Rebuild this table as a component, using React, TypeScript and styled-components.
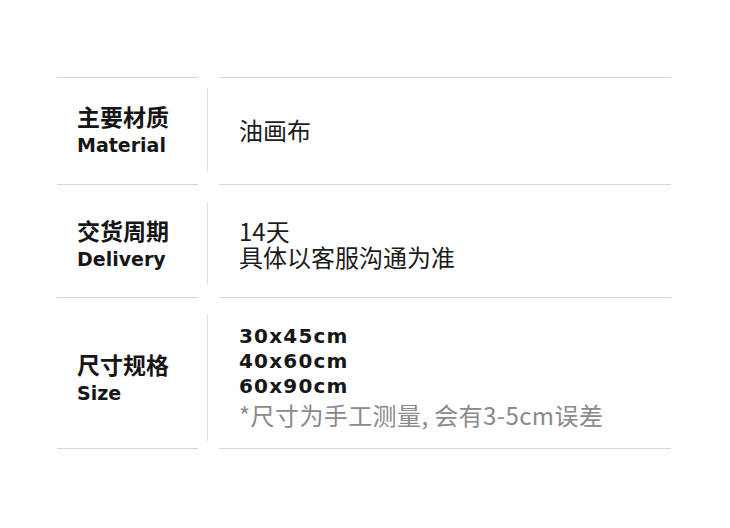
import React from "react";
import styled, { createGlobalStyle } from "styled-components";

const GlobalStyle = createGlobalStyle`
   html, body {
      margin: 0;
      padding: 0;
      background: #ffffff;
   }
   body {
      font-family: "Noto Sans CJK SC", "Noto Sans", sans-serif;
      color: #1c1c1c;
   }
`;

const LATIN_BOLD = `"DejaVu Sans", "Noto Sans CJK SC", sans-serif`;

const Page = styled.div`
   width: 730px;
   height: 528px;
   padding-top: 77px;
   box-sizing: border-box;
`;

const Table = styled.div`
   margin-left: 57px;
   width: 614px;
`;

const Row = styled.div<{ $last?: boolean }>`
   display: grid;
   grid-template-columns: 141px 1fr;
   column-gap: 21px;

   & > div {
      border-top: 1px solid #d6d6d6;
      border-bottom: ${(p) => (p.$last ? "1px solid #d6d6d6" : "none")};
   }
`;

const LabelCell = styled.div<{ $top: number; $bottom: number }>`
   display: flex;
   flex-direction: column;
   justify-content: center;
   padding: ${(p) => p.$top}px 0 ${(p) => p.$bottom}px 20px;
`;

const LabelCn = styled.div`
   font-size: 23px;
   font-weight: 700;
   line-height: 30px;
   color: #161616;
`;

const LabelEn = styled.div`
   font-family: ${LATIN_BOLD};
   font-size: 19px;
   font-weight: 700;
   line-height: 28px;
   color: #161616;
`;

const ValueCell = styled.div<{ $top: number; $bottom: number }>`
   padding: ${(p) => p.$top}px 0 ${(p) => p.$bottom}px 0;
`;

const ValueBox = styled.div<{ $height: number }>`
   margin-left: -12px;
   height: ${(p) => p.$height}px;
   border-left: 1px solid #dedede;
   padding-left: 31px;
   display: flex;
   flex-direction: column;
   justify-content: center;
`;

const Text = styled.div`
   font-size: 24px;
   line-height: 26px;
   color: #1c1c1c;
`;

const SizeText = styled.div`
   font-family: ${LATIN_BOLD};
   font-size: 20px;
   font-weight: 700;
   letter-spacing: 1.2px;
   line-height: 25px;
   color: #161616;
`;

const Note = styled.div`
   font-size: 24px;
   letter-spacing: 0.4px;
   line-height: 32px;
   color: #8a8a8a;
`;

const rows = [
   {
      cn: "主要材质",
      en: "Material",
      top: 10,
      height: 83,
      bottom: 13,
      value: <Text>油画布</Text>,
   },
   {
      cn: "交货周期",
      en: "Delivery",
      top: 17,
      height: 83,
      bottom: 12,
      value: (
         <>
            <Text>14天</Text>
            <Text>具体以客服沟通为准</Text>
         </>
      ),
   },
   {
      cn: "尺寸规格",
      en: "Size",
      top: 16,
      height: 127,
      bottom: 7,
      value: (
         <>
            <SizeText>30x45cm</SizeText>
            <SizeText>40x60cm</SizeText>
            <SizeText>60x90cm</SizeText>
            <Note>*尺寸为手工测量, 会有3-5cm误差</Note>
         </>
      ),
   },
];

export default function App() {
   return (
      <Page>
         <GlobalStyle />
         <Table>
            {rows.map((r, i) => (
               <Row key={r.cn} $last={i === rows.length - 1}>
                  <LabelCell $top={r.top} $bottom={r.bottom}>
                     <LabelCn>{r.cn}</LabelCn>
                     <LabelEn>{r.en}</LabelEn>
                  </LabelCell>
                  <ValueCell $top={r.top} $bottom={r.bottom}>
                     <ValueBox $height={r.height}>{r.value}</ValueBox>
                  </ValueCell>
               </Row>
            ))}
         </Table>
      </Page>
   );
}
